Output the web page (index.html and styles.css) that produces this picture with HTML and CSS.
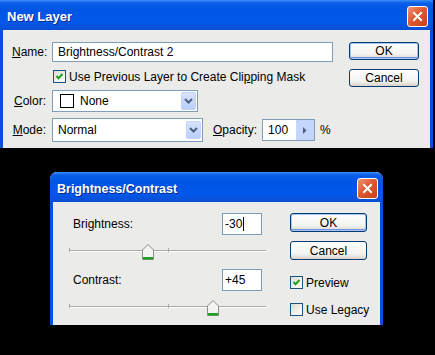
FILE: index.html
```html
<!DOCTYPE html>
<html lang="en">
<head>
  <meta charset="UTF-8">
  <title>New Layer / Brightness-Contrast</title>
  <link rel="stylesheet" href="styles.css">
</head>
<body>
  <div class="win win-layer">
    <div class="titlebar">
      <span class="title">New Layer</span>
      <span class="close"><svg width="11" height="11" viewBox="0 0 11 11"><path d="M2 2 L9 9 M9 2 L2 9" stroke="#fff" stroke-width="2" stroke-linecap="square"/></svg></span>
    </div>
    <div class="body layer-body">
      <div class="form">
        <div class="row r-name">
          <span class="lbl"><u>N</u>ame:</span>
          <div class="field name-field">Brightness/Contrast 2</div>
        </div>
        <div class="row r-check">
          <span class="check"><svg width="9" height="9" viewBox="0 0 9 9"><path d="M1.5 4 L3.5 6.2 L7.5 2" stroke="#21a121" stroke-width="2" fill="none"/></svg></span>
          <span>Use Previous Layer to Create Cli<u>p</u>ping Mask</span>
        </div>
        <div class="row r-color">
          <span class="lbl"><u>C</u>olor:</span>
          <div class="field select color-select">
            <span class="swatch"></span>None
            <span class="drop"><svg width="9" height="6" viewBox="0 0 9 6"><path d="M1 1 L4.5 4.5 L8 1" stroke="#4d6185" stroke-width="2" fill="none"/></svg></span>
          </div>
        </div>
        <div class="row r-mode">
          <span class="lbl"><u>M</u>ode:</span>
          <div class="field select mode-select">
            Normal
            <span class="drop"><svg width="9" height="6" viewBox="0 0 9 6"><path d="M1 1 L4.5 4.5 L8 1" stroke="#4d6185" stroke-width="2" fill="none"/></svg></span>
          </div>
          <span class="lbl-op"><u>O</u>pacity:</span>
          <div class="field op-field">
            100
            <span class="op-arrow"><svg width="4" height="7" viewBox="0 0 4 7"><path d="M0 0 L3.5 3.5 L0 7 Z" fill="#4d6185"/></svg></span>
          </div>
          <span class="pct">%</span>
        </div>
      </div>
      <div class="buttons">
        <button class="btn default">OK</button>
        <button class="btn">Cancel</button>
      </div>
    </div>
  </div>

  <div class="win win-bc">
    <div class="titlebar">
      <span class="title">Brightness/Contrast</span>
      <span class="close"><svg width="11" height="11" viewBox="0 0 11 11"><path d="M2 2 L9 9 M9 2 L2 9" stroke="#fff" stroke-width="2" stroke-linecap="square"/></svg></span>
    </div>
    <div class="body bc-body">
      <div class="bc-left">
        <div class="bc-row">
          <span>Brightness:</span>
          <div class="field num">-30<span class="caret"></span></div>
        </div>
        <div class="slider">
          <div class="track"></div>
          <span class="tick tick-start"></span>
          <span class="tick tick-mid"></span>
          <span class="thumb" style="left: 40.1%"><svg width="12" height="16" viewBox="0 0 12 16"><path d="M0.5 6 L6 0.5 L11.5 6 L11.5 15.5 L0.5 15.5 Z" fill="#f4f4f2" stroke="#8c8c8c"/><rect x="1" y="13" width="10" height="2.5" fill="#21a121"/></svg></span>
        </div>
        <div class="bc-row r-contrast">
          <span>Contrast:</span>
          <div class="field num">+45</div>
        </div>
        <div class="slider">
          <div class="track"></div>
          <span class="tick tick-start"></span>
          <span class="tick tick-mid"></span>
          <span class="thumb" style="left: 73.1%"><svg width="12" height="16" viewBox="0 0 12 16"><path d="M0.5 6 L6 0.5 L11.5 6 L11.5 15.5 L0.5 15.5 Z" fill="#f4f4f2" stroke="#8c8c8c"/><rect x="1" y="13" width="10" height="2.5" fill="#21a121"/></svg></span>
        </div>
      </div>
      <div class="bc-right">
        <button class="btn btn2 default">OK</button>
        <button class="btn btn2 btn-cancel">Cancel</button>
        <div class="chk-row chk-preview">
          <span class="check"><svg width="9" height="9" viewBox="0 0 9 9"><path d="M1.5 4 L3.5 6.2 L7.5 2" stroke="#21a121" stroke-width="2" fill="none"/></svg></span>
          <span>Preview</span>
        </div>
        <div class="chk-row chk-legacy">
          <span class="check"></span>
          <span>Use Legacy</span>
        </div>
      </div>
    </div>
  </div>
</body>
</html>
```

FILE: styles.css
```css
body { margin: 0; background: #000; font-family: 'Liberation Sans', Arial, sans-serif; font-size: 12px; color: #000; width: 435px; height: 355px; overflow: hidden; }
.win { background: #ebebea; display: flex; flex-direction: column; }
.win-layer { width: 433px; height: 148px; }
.win-bc { width: 333px; height: 153px; margin: 24px 0 0 50px; border-radius: 7px 7px 0 0; overflow: hidden; }

/* title bar */
.titlebar { height: 30px; flex: none; box-sizing: border-box; padding: 2px 5px 0 7px; display: flex; align-items: center; justify-content: space-between; color: #fff; font-weight: bold; font-size: 12.5px; text-shadow: 1px 1px 0 #0c2a8c; background: linear-gradient(#3d8ff7 0, #0b5ee8 3px, #0055e5 10px, #0258ea 22px, #0a4ed4 30px); }
.win-layer .title { font-size: 13px; }
.close { width: 21px; height: 21px; box-sizing: border-box; border: 1px solid #fff; border-radius: 3px; display: flex; align-items: center; justify-content: center; background: linear-gradient(135deg, #ef9478 0%, #de5a33 45%, #c63f17 100%); }
.win-bc .titlebar { padding: 3px 5px 0 7px; }

.body { flex: 1; display: flex; border-left: 3px solid #0a4fde; border-right: 3px solid #0a4fde; }

/* New Layer */
.layer-body { justify-content: space-between; padding: 12px 11px 0 9px; }
.form { display: flex; flex-direction: column; }
.row { display: flex; align-items: center; }
.r-name { height: 20px; }
.r-check { height: 13px; margin-top: 8px; padding-left: 41px; gap: 3px; }
.r-color { height: 22px; margin-top: 7px; }
.r-mode { height: 24px; margin-top: 6px; }
.lbl { width: 34px; text-align: right; margin-right: 6px; }
.field { background: #fff; border: 1px solid #7f9db9; box-sizing: border-box; display: flex; align-items: center; padding-left: 5px; }
.name-field { width: 281px; height: 20px; }
.select { padding-right: 1px; }
.color-select { width: 146px; height: 22px; padding-left: 7px; }
.mode-select { width: 151px; height: 24px; }
.swatch { width: 14px; height: 14px; box-sizing: border-box; border: 1px solid #000; background: #fff; margin-right: 6px; }
.drop { margin-left: auto; width: 15px; height: 18px; box-sizing: border-box; border: 1px solid #c3d3fd; border-radius: 2px; display: flex; align-items: center; justify-content: center; background: linear-gradient(#d8e4fd, #b9cefb); }
.lbl-op { margin-left: 10px; margin-right: 5px; }
.op-field { width: 53px; height: 22px; }
.op-arrow { margin-left: auto; width: 18px; align-self: stretch; display: flex; align-items: center; justify-content: center; background: #c4d6fc; }
.pct { margin-left: 5px; }

.buttons { display: flex; flex-direction: column; gap: 9px; }
.btn { width: 70px; height: 18px; padding: 0; box-sizing: border-box; font: 12px 'Liberation Sans', Arial, sans-serif; color: #000; border: 1px solid #003c74; border-radius: 3px; background: linear-gradient(#fff 0%, #f3f3ef 70%, #d8d3c8 100%); }
.btn.default { box-shadow: inset 0 0 0 1px #a9c4f2, inset 0 -1px 0 1px #6f98e4; }

/* Brightness/Contrast */
.bc-body { padding: 11px 0 0 16px; gap: 24px; }
.bc-left { width: 197px; display: flex; flex-direction: column; }
.bc-row { height: 22px; padding: 0 4px; display: flex; align-items: center; justify-content: space-between; }
.r-contrast { margin-top: 9px; }
.num { width: 40px; height: 22px; padding-left: 2px; }
.caret { display: inline-block; width: 1px; height: 14px; background: #000; margin-left: 1px; }
.slider { position: relative; height: 16px; margin-top: 9px; padding-top: 6px; box-sizing: border-box; }
.track { height: 0; border-top: 1px solid #a9a9a6; border-bottom: 1px solid #fff; }
.tick { position: absolute; top: 4px; width: 1px; height: 4px; background: #a9a9a6; }
.tick-start { left: 0; }
.tick-mid { left: 50%; }
.thumb { position: absolute; top: 0; margin-left: -6px; width: 12px; height: 16px; display: block; }

.bc-right { width: 77px; display: flex; flex-direction: column; }
.btn2 { width: 77px; height: 19px; }
.btn-cancel { margin-top: 9px; }
.chk-row { display: flex; align-items: center; gap: 3px; height: 13px; white-space: nowrap; }
.chk-preview { margin-top: 16px; }
.chk-legacy { margin-top: 14px; }
.check { width: 13px; height: 13px; flex: none; box-sizing: border-box; border: 1px solid #1c5180; display: flex; align-items: center; justify-content: center; background: linear-gradient(135deg, #dcdcd5, #fff); }
```
